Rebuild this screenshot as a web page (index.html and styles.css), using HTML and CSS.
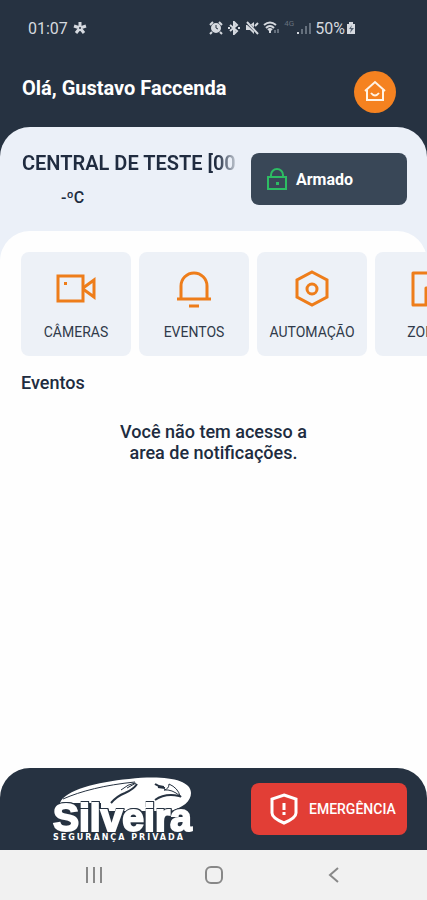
FILE: index.html
```html
<!DOCTYPE html>
<html lang="pt-BR">
<head>
<meta charset="utf-8">
<meta name="viewport" content="width=device-width, initial-scale=1">
<title>Central</title>
<link rel="stylesheet" href="styles.css">
</head>
<body>
<div class="app">
  <header class="top">
    <div class="status">
      <div class="status-left">
        <span>01:07</span>
        <svg width="14" height="14" viewBox="0 0 14 14" stroke="currentColor" stroke-width="3" fill="none"><path d="M7 7V1M7 7l6-2M7 7l4 5M7 7l-4 5M7 7L1 5"/><circle cx="7" cy="7" r="1" fill="#263241" stroke="none"/></svg>
      </div>
      <div class="status-right">
        <svg width="14" height="14" viewBox="0 0 14 14" fill="none" stroke="currentColor"><circle cx="7" cy="7" r="4" fill="currentColor" stroke-width="2"/><path d="M1 4l3-3M13 4l-3-3M3 11l-2 2M11 11l2 2" stroke-width="2"/><path d="M7 4v3l2 1" stroke="#263241"/></svg>
        <svg width="14" height="14" viewBox="0 0 14 14" fill="none" stroke="currentColor" stroke-width="2"><path d="M3 4l7 6-3 3V1l3 3-7 6"/><path d="M1 7h2M11 7h2"/></svg>
        <svg width="14" height="14" viewBox="0 0 14 14" fill="currentColor"><path d="M1 4h4l4-3v12L5 9H1z"/><path d="M1 1l12 11" stroke="#263241" stroke-width="3"/><path d="M2 1l11 12M10 5l3-3" stroke="currentColor" stroke-width="2"/></svg>
        <svg width="17" height="14" viewBox="0 0 17 14" fill="none" stroke="currentColor" stroke-width="2"><path d="M1 4q6-5 12 0M3 7q4-4 8 0M5 9q2-2 4 0"/><path d="M7 9v3" /><path d="M12 9v3M15 8v4" stroke="#65707d"/></svg>
        <span class="net">4G</span>
        <svg width="14" height="14" viewBox="0 0 14 14" fill="#65707d"><path d="M4 8h2v5H4zM8 5h2v8H8zM12 2h2v11h-2z"/><path d="M0 11h2v2H0z" fill="#d5d9df"/></svg>
        <span>50%</span>
        <svg width="10" height="14" viewBox="0 0 10 14"><path d="M3 1h4v2h2v10H1V3h2z" fill="currentColor"/><path d="M6 4L3 8h2l-1 4 4-5H5z" fill="#526070"/></svg>
      </div>
    </div>
    <div class="greeting">
      <h1>Olá, Gustavo Faccenda</h1>
      <button class="home" aria-label="Início">
        <svg width="24" height="24" viewBox="0 0 24 24" fill="none" stroke="#fff3e5" stroke-width="2"><path d="M2 11l10-9 10 9"/><path d="M4 10v10h16V10"/><path d="M8 13q4 5 8 0"/></svg>
      </button>
    </div>
  </header>

  <main class="content">
    <section class="central">
      <div class="central-info">
        <h2>CENTRAL DE TESTE [00</h2>
        <p>-ºC</p>
      </div>
      <button class="action armed">
        <svg width="20" height="22" viewBox="0 0 20 22" fill="none" stroke="#2dbd63" stroke-width="2"><path d="M1 9h18v12H1zM4 9V7a6 6 0 0 1 12 0v2"/><path d="M9 14h3v3H9z" fill="#2dbd63" stroke="none"/></svg>
        <span>Armado</span>
      </button>
    </section>

    <section class="sheet">
      <nav class="tiles">
        <button class="tile">
          <svg width="42" height="40" viewBox="0 0 42 40" fill="none" stroke="currentColor" stroke-width="3"><path d="M3 8h25v25H3z"/><path d="M28 20l11-8v17l-11-8"/><path d="M9 14h3v3H9z" fill="currentColor" stroke="none"/></svg>
          <span>CÂMERAS</span>
        </button>
        <button class="tile">
          <svg width="42" height="40" viewBox="0 0 42 40" fill="none" stroke="currentColor" stroke-width="3"><path d="M4 31h34M8 31V18a13 13 0 0 1 26 0v13M16 38h10"/></svg>
          <span>EVENTOS</span>
        </button>
        <button class="tile">
          <svg width="42" height="40" viewBox="0 0 42 40" fill="none" stroke="currentColor" stroke-width="3"><path d="M21 4l15 8v17l-15 8-15-8V12z"/><circle cx="21" cy="21" r="5"/></svg>
          <span>AUTOMAÇÃO</span>
        </button>
        <button class="tile">
          <svg width="42" height="40" viewBox="0 0 42 40" fill="none" stroke="currentColor" stroke-width="3" stroke-linejoin="round"><path d="M4 5h34v32H22V20h-5v17H4z"/></svg>
          <span>ZONAS</span>
        </button>
      </nav>
      <h3>Eventos</h3>
      <p class="empty">Você não tem acesso a area de notificações.</p>
    </section>
  </main>

  <footer class="bottom">
    <svg class="logo" width="146" height="66" viewBox="0 0 146 66" role="img" aria-label="Silveira Segurança Privada">
      <path d="M9 27C14 14 46 6 78 3c34-4 62 0 62 14 0 8-8 15-21 18H50V27z" fill="#fff"/>
      <path d="M12 23C30 15 54 9 84 6" fill="none" stroke="#263241"/>
      <g fill="none" stroke="#263241">
        <path d="M60 27q6-7 14-10 9-4 12-9" stroke-width="2"/>
        <path d="M70 14q7-6 14-7M76 12l9-5"/>
        <path d="M104 8q4 3 9 3M107 11l7 1" stroke-width="2"/>
        <path d="M118 8q0 5-5 6 8-1 16 6-2-8-11-12"/>
        <path d="M130 21q-1-1-2-1-14-3-24 4" stroke-width="2"/>
      </g>
      <text x="2" y="55" class="logo-name">Silveira</text>
      <text x="2" y="64" class="logo-tag">SEGURANÇA PRIVADA</text>
    </svg>
    <button class="action emergency">
      <svg width="28" height="32" viewBox="0 0 28 32" fill="none" stroke="#fff" stroke-width="3"><path d="M14 2l12 4v14q0 5-12 10Q2 25 2 20V6z"/><path d="M14 10v7M14 19v3"/></svg>
      <span>EMERGÊNCIA</span>
    </button>
  </footer>

  <nav class="system">
    <button aria-label="Recentes"><svg width="18" height="18" viewBox="0 0 18 18" stroke="currentColor" stroke-width="2"><path d="M2 1v16M9 1v16M16 1v16"/></svg></button>
    <button aria-label="Tela inicial"><svg width="18" height="18" viewBox="0 0 18 18" fill="none" stroke="currentColor" stroke-width="2"><rect x="1" y="1" width="16" height="16" rx="5"/></svg></button>
    <button aria-label="Voltar"><svg width="18" height="18" viewBox="0 0 18 18" fill="none" stroke="currentColor" stroke-width="2"><path d="M13 2L5 9l8 7"/></svg></button>
  </nav>
</div>
</body>
</html>
```
FILE: styles.css
```css
* { box-sizing: border-box; }
body, h1, h2, h3, p { margin: 0; }
body {
  font-family: Roboto, sans-serif;
  color: #202c40;
  background: #fefefe;
}
button {
  border: 0;
  padding: 0;
  font: inherit;
  color: inherit;
  background: none;
}
svg { display: block; flex: none; }

.app {
  display: flex;
  flex-direction: column;
  min-height: 100vh;
  overflow: hidden;
}

.top { background: #263241; color: #fff; }
.status {
  display: flex;
  justify-content: space-between;
  align-items: center;
  height: 56px;
  padding: 0 71px 0 28px;
  font-size: 16px;
  color: #d5d9df;
}
.status-left, .status-right { display: flex; align-items: center; }
.status-left { gap: 5px; }
.status-right { gap: 4px; }
.status-right span + svg { margin-left: -3px; }
.net { font-size: 8px; width: 12px; color: #65707d; align-self: flex-start; }
.greeting {
  display: flex;
  justify-content: space-between;
  align-items: center;
  height: 71px;
  padding: 0 31px 0 22px;
}
.greeting h1 { font-size: 20px; font-weight: 700; line-height: 24px; padding-bottom: 8px; }
.home {
  display: grid;
  place-items: center;
  width: 42px;
  height: 42px;
  border-radius: 50%;
  background: #f58220;
}

.content {
  flex: 1;
  display: flex;
  flex-direction: column;
  background: linear-gradient(#263241 64px, #ebf0f8 64px);
}
.central {
  display: flex;
  align-items: flex-start;
  gap: 10px;
  height: 104px;
  padding: 26px 20px 0 22px;
  border-radius: 30px 30px 0 0;
  background: #ebf0f8;
}
.central-info { flex: 1; min-width: 0; }
.central-info h2 {
  overflow: hidden;
  white-space: nowrap;
  font-size: 20px;
  font-weight: 600;
  line-height: 20px;
  -webkit-mask-image: linear-gradient(to left, transparent, #000 24px);
  mask-image: linear-gradient(to left, transparent, #000 24px);
}
.central-info p { padding: 16px 0 0 39px; font-size: 16px; font-weight: 500; line-height: 18px; }

.action {
  display: flex;
  align-items: center;
  flex: none;
  width: 156px;
  height: 52px;
  border-radius: 8px;
  color: #fff;
}
.armed { gap: 9px; padding-left: 16px; background: #394757; font-size: 16px; font-weight: 700; }
.emergency { gap: 11px; padding-left: 19px; background: #e23e36; font-size: 14px; font-weight: 500; }

.sheet {
  flex: 1;
  padding: 21px 0 0 21px;
  border-radius: 30px 30px 0 0;
  background: #fefefe;
}
.tiles { display: flex; gap: 8px; overflow: hidden; }
.tile {
  display: flex;
  flex-direction: column;
  align-items: center;
  gap: 16px;
  flex: none;
  width: 110px;
  height: 104px;
  padding-top: 16px;
  border-radius: 8px;
  background: #edf1f7;
  color: #ee7d1a;
}
.tile span { font-size: 14px; line-height: 16px; color: #303a4a; }
.sheet h3 { margin-top: 16px; font-size: 18px; font-weight: 500; line-height: 21px; }
.empty {
  padding: 28px 113px 0 92px;
  font-size: 18px;
  font-weight: 500;
  line-height: 21px;
  text-align: center;
}

.bottom {
  display: flex;
  align-items: center;
  justify-content: space-between;
  height: 82px;
  padding: 0 20px 0 51px;
  border-radius: 30px 30px 0 0;
  background: #263241;
}
.logo-name {
  font: 700 39px "Liberation Sans", sans-serif;
  fill: #fff;
  stroke: #fff;
  stroke-width: 2px;
  filter: drop-shadow(0 -1px 0 #263241) drop-shadow(1px 0 0 #263241);
}
.logo-tag {
  font: 700 8px "DejaVu Sans", sans-serif;
  letter-spacing: 2px;
  fill: #fff;
}

.system {
  display: flex;
  align-items: center;
  justify-content: center;
  gap: 102px;
  height: 50px;
  background: #f1f1f1;
  color: #888;
}
```
